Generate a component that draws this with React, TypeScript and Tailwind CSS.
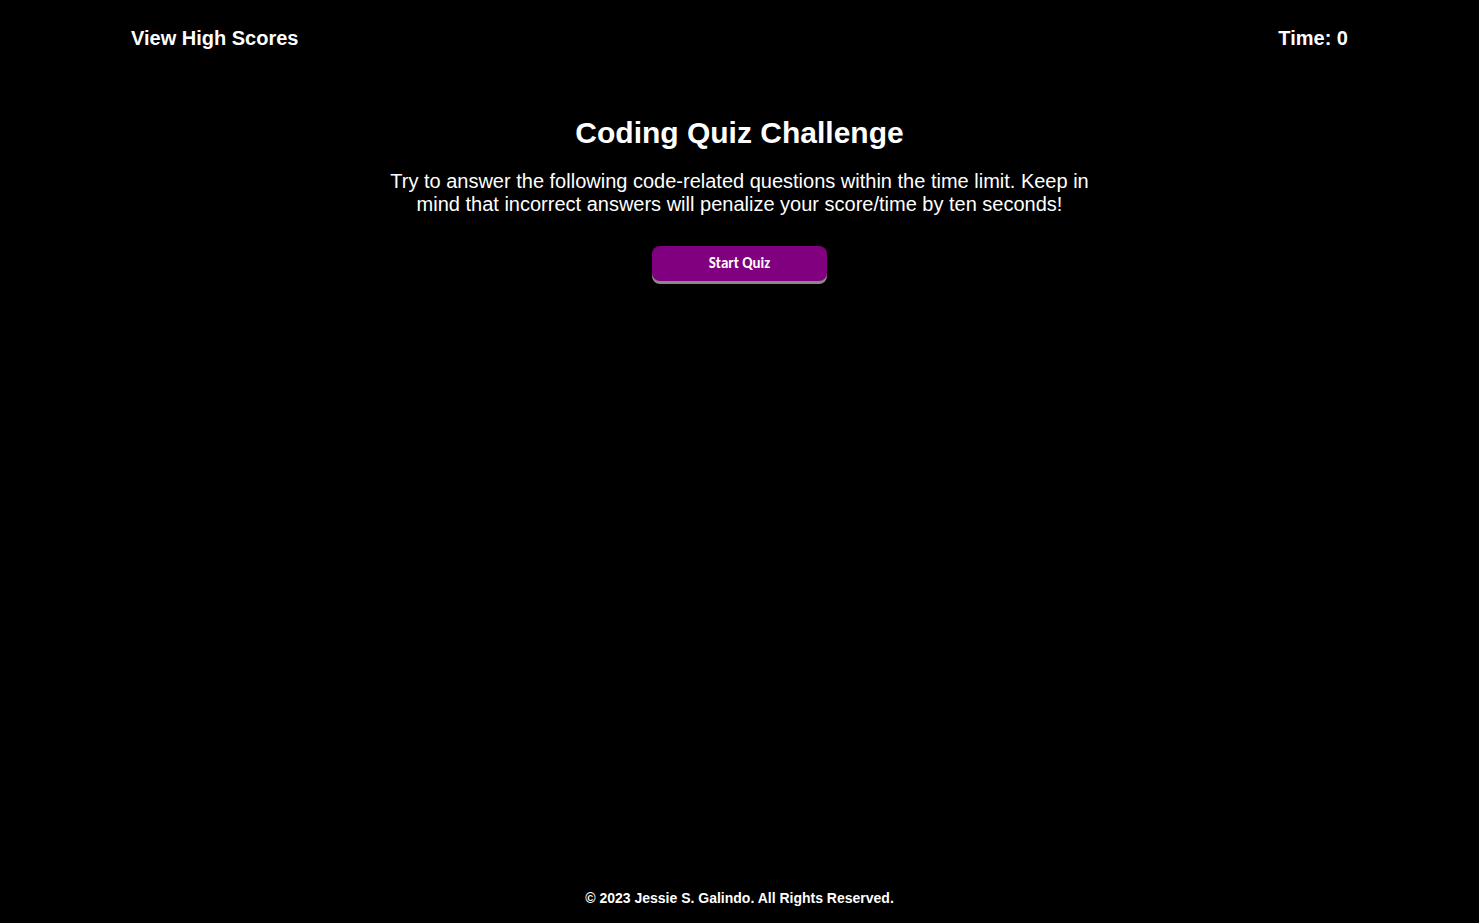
export default function App() {
  return (
    <div className="flex min-h-[923px] flex-col bg-black text-white" style={{ fontFamily: '"Liberation Sans", Arial, sans-serif' }}>
      <header className="flex items-center justify-between px-[131px] pt-[25px]">
        <a className="text-[20px] font-bold leading-[26px]">View High Scores</a>
        <p className="text-[20px] font-bold leading-[26px]">Time: 0</p>
      </header>

      <main className="flex flex-col items-center pt-[64px]">
        <h1 className="text-[30px] font-bold leading-[36px]">Coding Quiz Challenge</h1>
        <p className="mt-[19px] w-[720px] text-center text-[20px] leading-[23px]">
          Try to answer the following code-related questions within the time limit. Keep in mind that incorrect answers will penalize your score/time by ten seconds!
        </p>
        <button
          className="mt-[30px] h-[35px] w-[175px] rounded-[8px] bg-[#800080] text-[15px] font-bold text-white shadow-[0_3px_0_#8a8a8a]"
          style={{ fontFamily: 'Carlito, Lato, "DejaVu Sans", sans-serif' }}
        >
          Start Quiz
        </button>
      </main>

      <footer className="mt-auto pb-[14px] text-center text-[14px] font-bold">
        © 2023 Jessie S. Galindo. All Rights Reserved.
      </footer>
    </div>
  );
}
